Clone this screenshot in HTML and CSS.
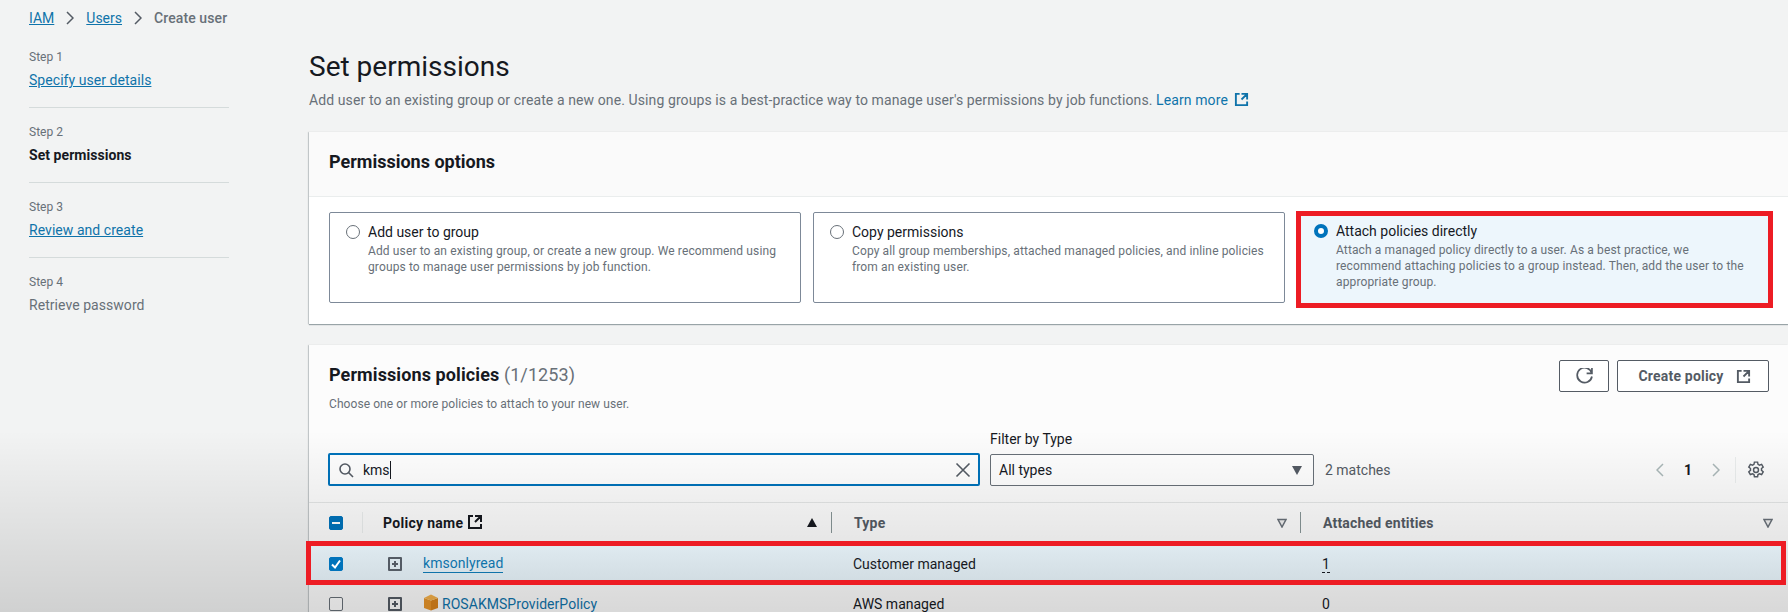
FILE: index.html
```html
<!DOCTYPE html>
<html lang="en">
<head>
    <meta charset="UTF-8">
    <title>Create user</title>
    <link rel="stylesheet" href="styles.css">
</head>
<body>
    <aside class="side">
        <nav class="crumbs">
            <a href="#">IAM</a>
            <svg class="crumb-sep" viewBox="0 0 8 14"><path d="M1 1l6 6-6 6"/></svg>
            <a href="#">Users</a>
            <svg class="crumb-sep" viewBox="0 0 8 14"><path d="M1 1l6 6-6 6"/></svg>
            <span class="crumb-current">Create user</span>
        </nav>
        <div class="step">
            <div class="step-num">Step 1</div>
            <a class="step-name" href="#">Specify user details</a>
        </div>
        <div class="step">
            <div class="step-num">Step 2</div>
            <div class="step-name current">Set permissions</div>
        </div>
        <div class="step">
            <div class="step-num">Step 3</div>
            <a class="step-name" href="#">Review and create</a>
        </div>
        <div class="step last">
            <div class="step-num">Step 4</div>
            <div class="step-name muted">Retrieve password</div>
        </div>
    </aside>

    <main class="main">
        <h1>Set permissions</h1>
        <p class="lead">Add user to an existing group or create a new one. Using groups is a best-practice way to manage user's permissions by job functions. <a href="#">Learn more</a>
            <svg class="icon ext blue" viewBox="0 0 16 16"><path d="M14 8V2H8M14 2L8 8M6 2H2v12h12v-4"/></svg>
        </p>

        <section class="card options">
            <h2 class="card-head">Permissions options</h2>
            <div class="tiles">
                <div class="tile">
                    <span class="radio"></span>
                    <div>
                        <div class="tile-title">Add user to group</div>
                        <div class="tile-desc">Add user to an existing group, or create a new group. We recommend using<br>groups to manage user permissions by job function.</div>
                    </div>
                </div>
                <div class="tile">
                    <span class="radio"></span>
                    <div>
                        <div class="tile-title">Copy permissions</div>
                        <div class="tile-desc">Copy all group memberships, attached managed policies, and inline policies<br>from an existing user.</div>
                    </div>
                </div>
                <div class="tile picked">
                    <span class="radio on"></span>
                    <div>
                        <div class="tile-title">Attach policies directly</div>
                        <div class="tile-desc">Attach a managed policy directly to a user. As a best practice, we<br>recommend attaching policies to a group instead. Then, add the user to the<br>appropriate group.</div>
                    </div>
                </div>
            </div>
        </section>

        <section class="card policies">
            <div class="pol-head">
                <div class="pol-title">
                    <h2>Permissions policies <span class="count">(1/1253)</span></h2>
                    <p>Choose one or more policies to attach to your new user.</p>
                </div>
                <div class="actions">
                    <button class="btn refresh">
                        <svg class="icon" viewBox="0 0 16 16"><path d="M10 5h5V0M14.900 5A7 7 0 1 0 15 8"/></svg>
                    </button>
                    <button class="btn create">Create policy
                        <svg class="icon ext" viewBox="0 0 16 16"><path d="M14 8V2H8M14 2L8 8M6 2H2v12h12v-4"/></svg>
                    </button>
                </div>
            </div>

            <div class="filters">
                <div class="search">
                    <svg class="icon" viewBox="0 0 16 16"><circle cx="7" cy="7" r="5"/><path d="M10.500 10.500L15 15"/></svg>
                    <span class="search-text">kms</span>
                    <svg class="icon clear" viewBox="0 0 16 16"><path d="M1.500 1.500l13 13M14.500 1.500l-13 13"/></svg>
                </div>
                <div class="type-filter">
                    <label>Filter by Type</label>
                    <div class="select">All types <span class="caret"></span></div>
                </div>
                <div class="matches">2 matches</div>
                <div class="pager">
                    <svg class="chev" viewBox="0 0 8 14"><path d="M7 1L1 7l6 6"/></svg>
                    <span class="page-num">1</span>
                    <svg class="chev" viewBox="0 0 8 14"><path d="M1 1l6 6-6 6"/></svg>
                    <span class="pager-line"></span>
                    <svg class="icon gear" viewBox="0 0 16 16"><path d="M6.600 1h2.800l.4 2 1.300.7 1.900-.7 1.400 2.400-1.500 1.300v1.600l1.500 1.300-1.400 2.400-1.900-.7-1.300.7-.4 2H6.600l-.4-2-1.300-.7-1.900.7-1.400-2.400 1.500-1.300V6.700L1.600 5.400 3 3l1.900.7 1.300-.7z"/><circle cx="8" cy="8" r="2.200"/></svg>
                </div>
            </div>

            <div class="table">
                <div class="thead">
                    <div class="th first"><span class="check mixed"></span></div>
                    <div class="th">
                        <span class="th-label dark">Policy name <svg class="icon ext" viewBox="0 0 16 16"><path d="M14 8V2H8M14 2L8 8M6 2H2v12h12v-4"/></svg></span>
                        <span class="sort-up"></span>
                    </div>
                    <div class="th">
                        <span class="th-label shift">Type</span>
                        <svg class="filter-icon" viewBox="0 0 10 10"><path d="M1 1.500h8L5 9z"/></svg>
                    </div>
                    <div class="th end">
                        <span class="th-label shift">Attached entities</span>
                        <svg class="filter-icon" viewBox="0 0 10 10"><path d="M1 1.500h8L5 9z"/></svg>
                    </div>
                </div>
                <div class="row selected">
                    <span class="check on"><svg viewBox="0 0 14 14"><path d="M3 7.500l3 3 5-7"/></svg></span>
                    <span class="expand"></span>
                    <span class="name"><a class="under" href="#">kmsonlyread</a></span>
                    <span>Customer managed</span>
                    <span><span class="dashed">1</span></span>
                </div>
                <div class="row">
                    <span class="check"></span>
                    <span class="expand"></span>
                    <span class="name">
                        <svg class="aws-box" viewBox="0 0 16 16"><path fill="#e8952a" d="M1 3.500L8 6v10l-7-2.500z"/><path fill="#d9831c" d="M15 3.500L8 6v10l7-2.500z"/><path fill="#f4b04a" d="M8 0l7 3.500L8 6 1 3.500z"/></svg>
                        <a href="#">ROSAKMSProviderPolicy</a>
                    </span>
                    <span>AWS managed</span>
                    <span>0</span>
                </div>
            </div>
        </section>
    </main>

    <div class="video-shade"></div>
</body>
</html>
```
FILE: styles.css
```css
* {
    box-sizing: border-box;
}

html, body {
    margin: 0;
    height: 612px;
    overflow: hidden;
}

body {
    display: flex;
    position: relative;
    font-family: Roboto, sans-serif;
    font-size: 14px;
    line-height: 20px;
    color: #16191f;
    background-color: #f2f3f3;
}

a {
    color: #0f73aa;
}

.icon {
    width: 16px;
    height: 16px;
    fill: none;
    stroke: #545b64;
    stroke-width: 1.6;
    flex: none;
}

.ext {
    width: 15px;
    height: 15px;
    stroke-width: 2;
    vertical-align: -2px;
}

.ext.blue {
    stroke: #0f73aa;
    margin-left: 2px;
}

/* left column */
.side {
    width: 309px;
    flex: none;
    padding: 8px 0 0 29px;
}

.crumbs {
    display: flex;
    align-items: center;
    height: 20px;
    margin-bottom: 21px;
}

.crumb-sep {
    width: 8px;
    height: 14px;
    margin: 0 12px;
    fill: none;
    stroke: #545b64;
    stroke-width: 1.500;
}

.crumb-current {
    color: #687078;
    font-weight: 500;
    letter-spacing: 0.1px;
}

.step {
    width: 200px;
    padding-bottom: 17px;
    margin-bottom: 16px;
    border-bottom: 1px solid #d5dbdb;
}

.step.last {
    border-bottom: none;
}

.step-num {
    font-size: 12px;
    line-height: 16px;
    color: #687078;
    margin-bottom: 5px;
}

.step-name {
    display: block;
    width: max-content;
    letter-spacing: 0.05px;
}

.step-name.current {
    font-weight: 700;
}

.step-name.muted {
    color: #687078;
}

/* main column */
.main {
    flex: 1;
    min-width: 0;
    padding-top: 52px;
}

h1 {
    margin: 0 0 8px;
    font-size: 28px;
    line-height: 30px;
    font-weight: 400;
}

.lead {
    margin: 0 0 22px;
    color: #687078;
    letter-spacing: 0.1px;
}

.lead a {
    text-decoration: none;
}

.card {
    background-color: #fff;
    box-shadow: 0 1px 1px rgba(0, 28, 36, 0.35), -1px 0 1px rgba(0, 28, 36, 0.15);
}

.card-head {
    margin: 0;
    height: 65px;
    padding: 19px 20px 0 20px;
    font-size: 18px;
    line-height: 22px;
    font-weight: 700;
    background-color: #fafafa;
    border-bottom: 1px solid #eaeded;
}

.tiles {
    display: grid;
    grid-template-columns: 472px 472px 472px;
    gap: 12px;
    padding: 15px 19px 21px 20px;
}

.tile {
    display: flex;
    gap: 8px;
    height: 91px;
    padding: 9px 16px;
    border: 1px solid #7d8998;
    border-radius: 2px;
}

.tile.picked {
    height: 97px;
    margin: -1px -4px -5px -1px;
    padding: 5px 13px;
    border: 5px solid #ed1c24;
    border-radius: 0;
    background-color: #edf6fc;
}

.tile-title {
    white-space: nowrap;
}

.tile-desc {
    font-size: 12px;
    line-height: 16px;
    color: #687078;
    white-space: nowrap;
    margin-top: 1px;
    letter-spacing: 0.125px;
}

.radio {
    width: 14px;
    height: 14px;
    margin-top: 3px;
    flex: none;
    border: 1px solid #687078;
    border-radius: 50%;
    background-color: #fff;
}

.radio.on {
    border: 4px solid #0073bb;
}

.policies {
    margin-top: 21px;
    background-color: #fcfcfc;
}

.pol-head {
    display: flex;
    justify-content: space-between;
    padding: 15px 19px 0 20px;
}

.pol-title h2 {
    margin: 4px 0 10px;
    font-size: 18px;
    line-height: 22px;
    font-weight: 700;
    letter-spacing: 0.1px;
}

.count {
    font-weight: 400;
    color: #687078;
}

.pol-title p {
    margin: 0;
    font-size: 12px;
    line-height: 16px;
    color: #687078;
    letter-spacing: 0.08px;
}

.actions {
    display: flex;
    gap: 8px;
}

.btn {
    display: flex;
    align-items: center;
    justify-content: center;
    gap: 12px;
    height: 32px;
    padding: 0;
    border: 1px solid #545b64;
    border-radius: 2px;
    background-color: #fff;
    color: #545b64;
    font: 700 14px Roboto, sans-serif;
    letter-spacing: 0.2px;
}

.refresh {
    width: 50px;
}

.refresh .icon {
    width: 17px;
    height: 17px;
}

.create {
    width: 152px;
    padding-left: 3px;
}

.filters {
    display: flex;
    align-items: flex-end;
    margin-top: 19px;
    padding: 0 0 16px 19px;
    border-bottom: 1px solid #e4e6e6;
}

.search {
    display: flex;
    align-items: center;
    width: 652px;
    height: 33px;
    padding: 0 7px 0 8px;
    border: 2px solid #0073bb;
    border-radius: 2px;
    background-color: #fff;
}

.search-text {
    margin-left: 9px;
    padding-right: 0;
    border-right: 1px solid #16191f;
    line-height: 18px;
}

.clear {
    margin-left: auto;
}

.type-filter {
    margin-left: 10px;
}

.type-filter label {
    display: block;
    font-size: 14px;
    line-height: 16px;
    margin-bottom: 7px;
}

.select {
    display: flex;
    align-items: center;
    justify-content: space-between;
    width: 324px;
    height: 32px;
    padding: 0 11px 0 8px;
    border: 1px solid #687078;
    border-radius: 2px;
    background-color: #fff;
}

.caret {
    border-left: 5px solid transparent;
    border-right: 5px solid transparent;
    border-top: 9px solid #545b64;
}

.matches {
    margin-left: 11px;
    height: 26px;
    color: #545b64;
}

.pager {
    display: flex;
    align-items: center;
    gap: 20px;
    height: 32px;
    margin-left: auto;
    margin-right: 23px;
}

.chev {
    width: 8px;
    height: 14px;
    fill: none;
    stroke: #aab7b8;
    stroke-width: 1.500;
}

.page-num {
    width: 8px;
    font-weight: 700;
}

.pager-line {
    width: 1px;
    height: 26px;
    margin-left: -5px;
    margin-right: -9px;
    background-color: #eaeded;
}

.gear {
    width: 18px;
    height: 18px;
    stroke-width: 1.300;
}

/* table */
.thead {
    display: grid;
    grid-template-columns: 54px 470px 469px 1fr;
    align-items: center;
    height: 38px;
    padding: 1px 0 0 20px;
}

.th {
    display: flex;
    align-items: center;
    justify-content: space-between;
    height: 21px;
    margin-right: 21px;
    padding-right: 11px;
    border-right: 1px solid #879596;
}

.th.first {
    padding-right: 0;
    margin-right: 20px;
    border-right: 1px solid #eaeded;
}

.th.end {
    border-right: none;
    margin-right: 0;
    padding-right: 15px;
}

.th-label {
    font-weight: 700;
    color: #545b64;
    letter-spacing: 0.2px;
}

.th-label.dark {
    color: #16191f;
    letter-spacing: 0.3px;
}

.th-label.shift {
    margin-left: 1px;
}

.th-label .icon {
    width: 16px;
    height: 16px;
    stroke: #16191f;
}

.sort-up {
    margin-right: 3px;
    border-left: 5px solid transparent;
    border-right: 5px solid transparent;
    border-bottom: 9px solid #16191f;
}

.filter-icon {
    width: 10px;
    height: 10px;
    margin-right: 2px;
    fill: #eee;
    stroke: #687078;
    stroke-width: 1.500;
}

.th.end .filter-icon {
    margin-right: 0;
}

.row {
    display: grid;
    grid-template-columns: 59px 35px 430px 469px 1fr;
    align-items: center;
    height: 38px;
    padding-left: 20px;
}

/* sits above the shade, its colours are already the darkened ones */
.row.selected {
    position: relative;
    z-index: 2;
    height: 44px;
    margin-left: -3px;
    margin-right: 2px;
    padding: 1px 0 0 18px;
    border: 5px solid #ed1c24;
    background: linear-gradient(#dfeaf0, #d2dde3);
}

.check {
    display: block;
    width: 14px;
    height: 14px;
    border: 1px solid #687078;
    border-radius: 2px;
    background-color: #fff;
}

.check.on, .check.mixed {
    border-color: #0073bb;
    background-color: #0073bb;
    position: relative;
}

.check.on svg {
    display: block;
    margin: -1px;
    width: 14px;
    height: 14px;
    fill: none;
    stroke: #fff;
    stroke-width: 2;
}

.check.mixed::after {
    content: "";
    position: absolute;
    left: 2px;
    right: 2px;
    top: 5px;
    height: 2px;
    background-color: #fff;
}

.expand {
    display: block;
    position: relative;
    width: 14px;
    height: 14px;
    border: 2px solid #545b64;
    border-radius: 1px;
}

.expand::before, .expand::after {
    content: "";
    position: absolute;
    background-color: #545b64;
}

.expand::before {
    left: 2px;
    right: 2px;
    top: 4px;
    height: 2px;
}

.expand::after {
    top: 2px;
    bottom: 2px;
    left: 4px;
    width: 2px;
}

.name {
    display: flex;
    align-items: center;
    gap: 3px;
    letter-spacing: 0.05px;
}

.name a {
    text-decoration: none;
}

.name a.under {
    border-bottom: 1px solid #0f73aa;
    line-height: 18px;
}

.aws-box {
    width: 16px;
    height: 17px;
    margin-top: -4px;
}

.dashed {
    border-bottom: 1px dashed #16191f;
}

/* darkening that the video player puts on the bottom of the frame */
.video-shade {
    position: absolute;
    left: 0;
    right: 0;
    bottom: 0;
    height: 182px;
    z-index: 1;
    pointer-events: none;
    background: linear-gradient(rgba(0, 0, 0, 0), rgba(0, 0, 0, 0.14));
}
```
